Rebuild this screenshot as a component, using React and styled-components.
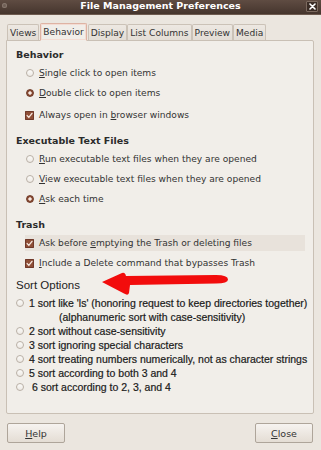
import React from 'react';
import styled, { createGlobalStyle } from 'styled-components';

const GlobalStyle = createGlobalStyle`
  html, body {
    margin: 0;
    padding: 0;
  }

  body {
    width: 321px;
    height: 450px;
    overflow: hidden;
    background: #ebe6df;
    font-family: "DejaVu Sans", sans-serif;
    color: #333;
  }
`;

const tabs = ['Views', 'Behavior', 'Display', 'List Columns', 'Preview', 'Media'];

const sortItems = [
  { label: "1 sort like 'ls' (honoring request to keep directories together)", more: '(alphanumeric sort with case-sensitivity)' },
  { label: '2 sort without case-sensitivity' },
  { label: '3 sort ignoring special characters' },
  { label: '4 sort treating numbers numerically, not as character strings' },
  { label: '5 sort according to both 3 and 4' },
  { label: ' 6 sort according to 2, 3, and 4' },
];

function Radio({ checked }) {
  return <RadioMark $checked={checked} />;
}

function Check() {
  return (
    <CheckMark>
      <svg width="9" height="9" viewBox="0 0 9 9">
        <path d="M2.2 4.6 L3.8 6.4 L7 2.4" fill="none" stroke="#f6e6de" strokeWidth="1.4" strokeLinecap="round" strokeLinejoin="round" />
      </svg>
    </CheckMark>
  );
}

// hand-drawn red arrow pointing at "Sort Options"
function Arrow() {
  return (
    <ArrowMark width="130" height="26" viewBox="0 0 130 26">
      <path
        d="M2 11 L22 2 Q25 1 26 5 L116 4 Q128 4 128 8.5 Q128 12.5 116 12.5 L30 14 L29 22 Q28 25 24 22.5 Z"
        fill="#f20c0c"
      />
    </ArrowMark>
  );
}

function App() {
  return (
    <Window>
      <GlobalStyle />
      <TitleBar>
        <WinDot />
        <Title>File Management Preferences</Title>
        <CloseBox>
          <svg width="7" height="7" viewBox="0 0 7 7">
            <path d="M1 1 L6 6 M6 1 L1 6" stroke="#fff" strokeWidth="1.6" strokeLinecap="round" />
          </svg>
        </CloseBox>
      </TitleBar>

      <Body>
        <TabRow>
          {tabs.map((t) => (
            <Tab key={t} $active={t === 'Behavior'}>
              {t}
            </Tab>
          ))}
        </TabRow>

        <Panel>
          <Section>
            <Heading>Behavior</Heading>
            <Options>
              <Option>
                <Radio />
                <span><U>S</U>ingle click to open items</span>
              </Option>
              <Option>
                <Radio checked />
                <span><U>D</U>ouble click to open items</span>
              </Option>
              <Option $spaced>
                <Check />
                <span>Always open in <U>b</U>rowser windows</span>
              </Option>
            </Options>
          </Section>

          <Section $gap={9}>
            <Heading>Executable Text Files</Heading>
            <Options>
              <Option>
                <Radio />
                <span><U>R</U>un executable text files when they are opened</span>
              </Option>
              <Option>
                <Radio />
                <span><U>V</U>iew executable text files when they are opened</span>
              </Option>
              <Option>
                <Radio checked />
                <span><U>A</U>sk each time</span>
              </Option>
            </Options>
          </Section>

          <Section $gap={9}>
            <Heading>Trash</Heading>
            <Options>
              <Option $highlight>
                <Check />
                <span>Ask before <U>e</U>mptying the Trash or deleting files</span>
              </Option>
              <Option>
                <Check />
                <span><U>I</U>nclude a Delete command that bypasses Trash</span>
              </Option>
            </Options>
          </Section>

          <Section $gap={2}>
            <SortHeading>
              Sort Options
              <Arrow />
            </SortHeading>
            {sortItems.map((item) => (
              <React.Fragment key={item.label}>
                <SortRow>
                  <SortRadio />
                  <span>{item.label}</span>
                </SortRow>
                {item.more && <SortMore>{item.more}</SortMore>}
              </React.Fragment>
            ))}
          </Section>
        </Panel>

        <Footer>
          <Button><U>H</U>elp</Button>
          <Button><U>C</U>lose</Button>
        </Footer>
      </Body>
    </Window>
  );
}

const Window = styled.div`
  width: 321px;
  height: 450px;
  display: flex;
  flex-direction: column;
  background: #ebe6df;
`;

const TitleBar = styled.div`
  height: 14px;
  display: grid;
  grid-template-columns: 1fr auto 1fr;
  align-items: start;
  background: linear-gradient(#5f4c42, #45352d);
  border-bottom: 1px solid #6d5a4f;
`;

const WinDot = styled.span`
  width: 5px;
  height: 5px;
  margin: 3px 0 0 2px;
  border-radius: 50%;
  background: #6f5f56;
  box-shadow: inset 0 0 0 1px #86766c;
`;

const Title = styled.div`
  font-size: 9.5px;
  font-weight: bold;
  line-height: 11px;
  color: #fff;
  white-space: nowrap;
`;

const CloseBox = styled.span`
  justify-self: end;
  width: 10px;
  height: 9px;
  margin: 1px 3px 0 0;
  display: flex;
  align-items: center;
  justify-content: center;
  background: #3b2d26;
  border: 1px solid #7c6a5f;
  border-radius: 1px;
`;

const Body = styled.div`
  flex: 1;
  display: flex;
  flex-direction: column;
  padding: 7px 7px 0 6px;
`;

const TabRow = styled.div`
  display: flex;
  align-items: flex-end;
  height: 18px;
  padding-left: 1px;
  position: relative;
  z-index: 1;
`;

const Tab = styled.div`
  height: ${(p) => (p.$active ? '18px' : '16px')};
  padding: 0 2px;
  margin: ${(p) => (p.$active ? '0 1px -1px 1px' : '0')};
  display: flex;
  align-items: center;
  box-sizing: border-box;
  font-size: 9.1px;
  white-space: nowrap;
  color: #333;
  border: 1px solid ${(p) => (p.$active ? '#deb3a3' : '#cbc2b7')};
  border-bottom: ${(p) => (p.$active ? '1px solid #f1eee9' : '0')};
  border-radius: 2px 2px 0 0;
  background: ${(p) => (p.$active ? '#f1eee9' : 'linear-gradient(#ede8e2, #e3ddd5)')};
  box-shadow: ${(p) => (p.$active ? 'inset 0 0 0 1px #f3dcd3' : 'none')};
`;

const Panel = styled.div`
  height: 374px;
  box-sizing: border-box;
  border: 1px solid #c9c0b5;
  border-radius: 0 2px 2px 2px;
  background: #f1eee9;
  padding: 7px 8px 0 9px;
  display: flex;
  flex-direction: column;
`;

const Section = styled.div`
  display: flex;
  flex-direction: column;
  margin-top: ${(p) => p.$gap || 0}px;
`;

const Heading = styled.div`
  height: 15px;
  line-height: 14px;
  font-size: 9.5px;
  font-weight: bold;
  color: #2b2b2b;
`;

const Options = styled.div`
  display: flex;
  flex-direction: column;
  margin-left: 9px;
`;

const Option = styled.div`
  height: 16px;
  margin: ${(p) => (p.$spaced ? '4px' : '2px')} 0 2px;
  display: flex;
  align-items: center;
  gap: 5px;
  font-size: 9.1px;
  color: #333;
  white-space: nowrap;
  background: ${(p) => (p.$highlight ? '#e8e2db' : 'transparent')};
`;

const U = styled.span`
  text-decoration: underline;
  text-underline-offset: 1px;
  text-decoration-thickness: 1px;
`;

const RadioMark = styled.span`
  width: 8px;
  height: 8px;
  margin-left: 1px;
  box-sizing: border-box;
  border-radius: 50%;
  flex-shrink: 0;
  background: ${(p) =>
    p.$checked
      ? 'radial-gradient(circle, #f6e9e2 0 1.4px, #8a4b34 1.9px)'
      : 'linear-gradient(#fbfaf8, #eeeae5)'};
  border: 1px solid ${(p) => (p.$checked ? '#6f3a27' : '#b9b0a6')};
`;

const CheckMark = styled.span`
  width: 9px;
  height: 9px;
  flex-shrink: 0;
  display: flex;
  border-radius: 1px;
  background: #8e4e36;
  box-shadow: inset 0 0 0 1px #70392a;
`;

const SortHeading = styled.div`
  position: relative;
  height: 21px;
  line-height: 21px;
  font-family: "Comic Sans MS", "Liberation Sans", sans-serif;
  font-size: 11.5px;
  color: #222;
`;

const ArrowMark = styled.svg`
  position: absolute;
  left: 84px;
  top: -4px;
`;

const SortRow = styled.div`
  height: 14px;
  display: flex;
  align-items: center;
  gap: 5px;
  font-family: "Comic Sans MS", "Liberation Sans", sans-serif;
  font-size: 10.5px;
  color: #1a1a1a;
  -webkit-text-stroke: 0.2px #1a1a1a;
  white-space: pre;
`;

const SortRadio = styled.span`
  width: 8px;
  height: 8px;
  box-sizing: border-box;
  border-radius: 50%;
  flex-shrink: 0;
  background: linear-gradient(#fbfaf8, #eeeae5);
  border: 1px solid #b9b0a6;
`;

const SortMore = styled.div`
  height: 14px;
  line-height: 14px;
  padding-left: 43px;
  font-family: "Comic Sans MS", "Liberation Sans", sans-serif;
  font-size: 10.5px;
  color: #1a1a1a;
  -webkit-text-stroke: 0.2px #1a1a1a;
  white-space: nowrap;
`;

const Footer = styled.div`
  display: flex;
  justify-content: space-between;
  margin: 9px 1px 0 1px;
`;

const Button = styled.div`
  width: 58px;
  height: 20px;
  box-sizing: border-box;
  display: flex;
  align-items: center;
  justify-content: center;
  font-size: 9.5px;
  color: #333;
  border: 1px solid #aea59a;
  border-radius: 2px;
  background: linear-gradient(#f6f3f0, #e4ddd4);
`;

export default App;
